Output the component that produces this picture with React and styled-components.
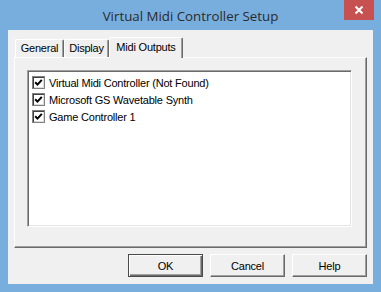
import React from "react";
import styled, { createGlobalStyle } from "styled-components";

const Global = createGlobalStyle`
  html, body { margin: 0; padding: 0; background: #76acdb; }
  body { font-family: "Liberation Sans", Arial, sans-serif; }
`;

const Window = styled.div`
  width: 381px;
  height: 292px;
  background: #78aedd;
  display: flex;
  flex-direction: column;
  box-sizing: border-box;
`;

const TitleBar = styled.div`
  position: relative;
  height: 30px;
  display: flex;
  align-items: center;
  justify-content: center;
`;

const Title = styled.div`
  font-family: "Open Sans", "Noto Sans", sans-serif;
  font-size: 13.3px;
  color: #2b2b2b;
  margin-top: 1px;
`;

const CloseButton = styled.div`
  position: absolute;
  top: 0;
  right: 7px;
  width: 30px;
  height: 20px;
  background: #c75050;
  display: flex;
  align-items: center;
  justify-content: center;
`;

const Client = styled.div`
  flex: 1;
  margin: 0 8px 8px 8px;
  background: #f0f0f0;
  padding: 7px 6px 0 6px;
  display: flex;
  flex-direction: column;
  font-size: 11px;
  letter-spacing: -0.2px;
  color: #000;
`;

const TabRow = styled.div`
  display: flex;
  align-items: flex-end;
  height: 20px;
  padding-left: 1px;
  position: relative;
  z-index: 1;
`;

const Tab = styled.div`
  box-sizing: border-box;
  width: ${(p) => p.$w}px;
  height: ${(p) => (p.$active ? 21 : 18)}px;
  margin-bottom: ${(p) => (p.$active ? -1 : 0)}px;
  background: #f0f0f0;
  border-top: 1px solid #ffffff;
  border-left: 1px solid #ffffff;
  border-right: 1px solid #696969;
  box-shadow: inset -1px 0 0 #a0a0a0;
  border-radius: 2px 2px 0 0;
  white-space: nowrap;
  display: flex;
  justify-content: center;
  padding-top: ${(p) => (p.$active ? 3 : 2)}px;
`;

const Panel = styled.div`
  box-sizing: border-box;
  height: 191px;
  border-top: 1px solid #ffffff;
  border-left: 1px solid #ffffff;
  border-right: 1px solid #696969;
  border-bottom: 1px solid #696969;
  box-shadow: inset -1px -1px 0 #a0a0a0;
  padding: 12px 14px 20px 12px;
  display: flex;
`;

const ListBox = styled.div`
  flex: 1;
  background: #ffffff;
  border-top: 1px solid #a0a0a0;
  border-left: 1px solid #a0a0a0;
  border-right: 1px solid #ffffff;
  border-bottom: 1px solid #ffffff;
  box-shadow: inset 1px 1px 0 #696969, inset -1px -1px 0 #e3e3e3;
  padding: 3px 4px;
  display: flex;
  flex-direction: column;
`;

const Item = styled.label`
  display: flex;
  align-items: center;
  height: 17px;
  gap: 4px;
`;

const Box = styled.span`
  width: 13px;
  height: 13px;
  box-sizing: border-box;
  background: #fff;
  border: 1px solid #808080;
  box-shadow: inset 1px 1px 0 #404040, inset -1px -1px 0 #dcdcdc;
  display: flex;
  align-items: center;
  justify-content: center;
`;

const ButtonRow = styled.div`
  display: flex;
  justify-content: flex-end;
  gap: 7px;
  margin-top: 6px;
`;

const Button = styled.div`
  box-sizing: border-box;
  width: 75px;
  height: 23px;
  background: #f0f0f0;
  border: 1px solid;
  border-color: ${(p) =>
    p.$default ? "#4a4a4a" : "#ffffff #696969 #696969 #ffffff"};
  box-shadow: ${(p) =>
    p.$default
      ? "inset 1px 1px 0 #ffffff, inset -1px -1px 0 #696969, inset -2px -2px 0 #a0a0a0"
      : "inset -1px -1px 0 #a0a0a0"};
  display: flex;
  align-items: center;
  justify-content: center;
`;

const Check = () => (
  <Box>
    <svg width="9" height="9" viewBox="0 0 9 9">
      <path d="M1.2 4.2 L3.5 6.6 L7.8 1.8" stroke="#000" strokeWidth="2" fill="none" />
    </svg>
  </Box>
);

const items = [
  "Virtual Midi Controller (Not Found)",
  "Microsoft GS Wavetable Synth",
  "Game Controller 1",
];

export default function App() {
  return (
    <>
      <Global />
      <Window>
        <TitleBar>
          <Title>Virtual Midi Controller Setup</Title>
          <CloseButton>
            <svg width="10" height="10" viewBox="0 0 10 10">
              <path d="M1.5 1.5 L8.5 8.5 M8.5 1.5 L1.5 8.5" stroke="#fff" strokeWidth="2" />
            </svg>
          </CloseButton>
        </TitleBar>
        <Client>
          <TabRow>
            <Tab $w={49}>General</Tab>
            <Tab $w={45}>Display</Tab>
            <Tab $w={74} $active>Midi Outputs</Tab>
          </TabRow>
          <Panel>
            <ListBox>
              {items.map((t) => (
                <Item key={t}>
                  <Check />
                  {t}
                </Item>
              ))}
            </ListBox>
          </Panel>
          <ButtonRow>
            <Button $default>OK</Button>
            <Button>Cancel</Button>
            <Button>Help</Button>
          </ButtonRow>
        </Client>
      </Window>
    </>
  );
}
